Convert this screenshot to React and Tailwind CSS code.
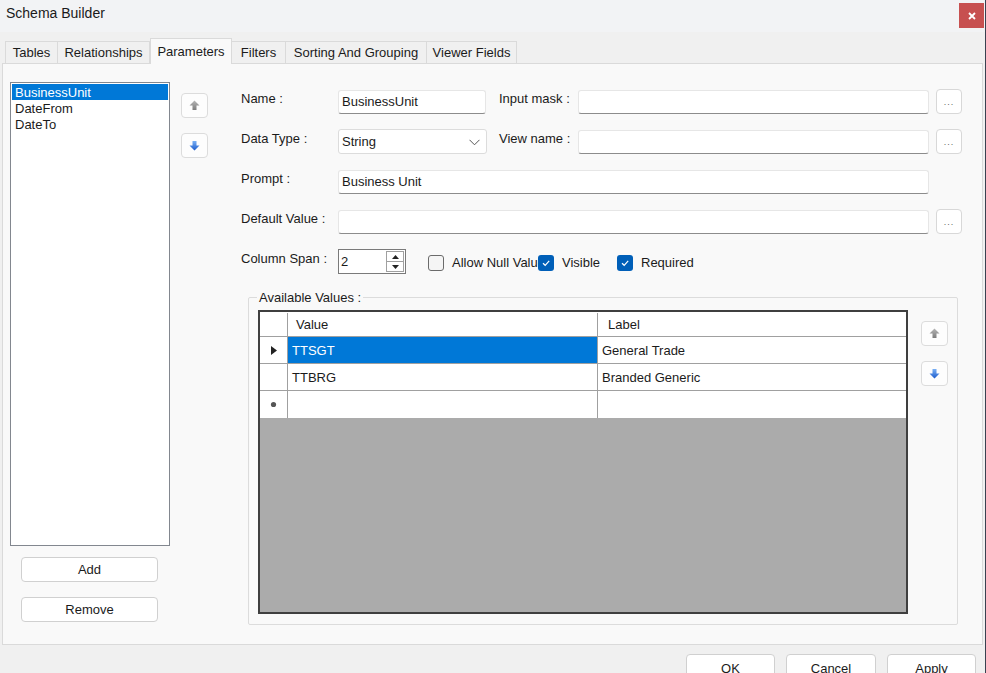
import React from "react";

const F = { fontFamily: '"Liberation Sans", Arial, sans-serif' };

function UpArrow({ active }) {
  return (
    <svg width="11" height="11" viewBox="0 0 11 11">
      <defs>
        <linearGradient id={active ? "ga" : "gb"} x1="0" y1="0" x2="0" y2="1">
          <stop offset="0" stopColor={active ? "#6aa3f0" : "#b5b5b5"} />
          <stop offset="1" stopColor={active ? "#1f5fd0" : "#7d7d7d"} />
        </linearGradient>
      </defs>
      <polygon points="5.5,0.5 10.5,5.5 7.5,5.5 7.5,10 3.5,10 3.5,5.5 0.5,5.5" fill={`url(#${active ? "ga" : "gb"})`} />
    </svg>
  );
}

function DownArrow() {
  return (
    <svg width="11" height="11" viewBox="0 0 11 11">
      <defs>
        <linearGradient id="gd" x1="0" y1="0" x2="0" y2="1">
          <stop offset="0" stopColor="#79b0f5" />
          <stop offset="1" stopColor="#1d5ccc" />
        </linearGradient>
      </defs>
      <polygon points="3.5,1 7.5,1 7.5,5.5 10.5,5.5 5.5,10.5 0.5,5.5 3.5,5.5" fill="url(#gd)" />
    </svg>
  );
}

function ArrowBtn({ down, disabled }) {
  return (
    <div className="flex h-[25px] w-[27px] items-center justify-center rounded-[4px] border border-[#dcdcdc] bg-[#fdfdfd]">
      {down ? <DownArrow /> : <UpArrow active={!disabled} />}
    </div>
  );
}

function Input({ w, value }) {
  return (
    <div
      className={`flex h-[24px] items-center rounded-[3px] border border-[#e6e6e6] border-b-[#8c8c8c] bg-white pl-[3px] pt-[1px] text-[13px] text-[#1b1b1b] ${w}`}
    >
      {value}
    </div>
  );
}

function Dots() {
  return (
    <div className="ml-[7px] flex h-[25px] w-[26px] items-end justify-center rounded-[4px] border border-[#d8d8d8] bg-white pb-[6px] text-[9px] leading-none tracking-[1px] text-[#666]">
      ...
    </div>
  );
}

function Label({ children, w }) {
  return <div className={`self-start pt-[2px] text-[13px] leading-[15px] text-[#1b1b1b] ${w}`}>{children}</div>;
}

function CheckBox({ checked }) {
  if (checked) {
    return (
      <div className="flex h-[16px] w-[16px] shrink-0 items-center justify-center rounded-[3px] bg-[#005fb8]">
        <svg width="10" height="10" viewBox="0 0 10 10">
          <path d="M2 5.2 L4.2 7.3 L8.2 2.8" fill="none" stroke="white" strokeWidth="1.2" />
        </svg>
      </div>
    );
  }
  return <div className="h-[16px] w-[16px] shrink-0 rounded-[3px] border border-[#6b6b6b] bg-[#f5f5f5]" />;
}

export default function App() {
  return (
    <div className="flex h-[673px] w-[986px] overflow-hidden bg-[#3a4150]" style={F}>
      <div className="flex h-[673px] w-[985px] flex-col bg-[#f0f0f0] text-[#1b1b1b]">
        {/* Title bar */}
        <div className="flex h-[32px] shrink-0 items-start justify-between bg-[#f2f3f5]">
          <div className="pl-[6px] pt-[4px] text-[14px] leading-[18px] text-[#1a1a1a]">Schema Builder</div>
          <div className="mt-[3px] mr-[1px] flex h-[25px] w-[25px] items-center justify-center bg-[#c75050]">
            <svg width="8" height="8" viewBox="0 0 8 8">
              <path d="M1 1 L7 7 M7 1 L1 7" stroke="white" strokeWidth="1.8" />
            </svg>
          </div>
        </div>

        {/* Tabs */}
        <div className="flex h-[31px] shrink-0 items-end pl-[5px] text-[13px]">
          <div className="flex h-[22px] w-[53px] items-center justify-center border border-b-0 border-[#dadada] bg-[#f0f0f0] pt-[1px]">Tables</div>
          <div className="flex h-[22px] w-[92px] items-center justify-center border border-b-0 border-l-0 border-[#dadada] bg-[#f0f0f0] pt-[1px]">Relationships</div>
          <div className="relative -mb-[1px] flex h-[26px] w-[82px] items-start justify-center border border-b-0 border-[#dadada] bg-[#f9f9f9] pt-[3px]">Parameters</div>
          <div className="flex h-[22px] w-[54px] items-center justify-center border border-b-0 border-l-0 border-[#dadada] bg-[#f0f0f0] pt-[1px]">Filters</div>
          <div className="flex h-[22px] w-[141px] items-center justify-center border border-b-0 border-l-0 border-[#dadada] bg-[#f0f0f0] pt-[1px]">Sorting And Grouping</div>
          <div className="flex h-[22px] w-[90px] items-center justify-center border border-b-0 border-l-0 border-[#dadada] bg-[#f0f0f0] pt-[1px]">Viewer Fields</div>
        </div>

        {/* Tab page */}
        <div className="mx-[2px] flex h-[582px] w-[981px] shrink-0 border border-[#dadada] bg-[#f9f9f9]">
          {/* left column */}
          <div className="ml-[7px] mt-[18px] flex w-[160px] flex-col">
            <div className="h-[464px] w-[160px] border border-[#82878f] bg-white p-[1px] text-[13px] leading-[16px]">
              <div className="h-[16px] bg-[#0078d7] pl-[3px] pt-[1px] text-white">BusinessUnit</div>
              <div className="h-[16px] pl-[3px] pt-[1px]">DateFrom</div>
              <div className="h-[16px] pl-[3px] pt-[1px]">DateTo</div>
            </div>
            <div className="ml-[11px] mt-[11px] flex h-[25px] w-[137px] items-center justify-center rounded-[4px] border border-[#d0d0d0] bg-white pt-[1px] text-[13px]">Add</div>
            <div className="ml-[11px] mt-[15px] flex h-[25px] w-[137px] items-center justify-center rounded-[4px] border border-[#d0d0d0] bg-white pt-[1px] text-[13px]">Remove</div>
          </div>

          {/* arrows */}
          <div className="ml-[11px] mt-[29px] flex flex-col gap-[15px]">
            <ArrowBtn disabled />
            <ArrowBtn down />
          </div>

          {/* form */}
          <div className="ml-[33px] mt-[25px] flex w-[721px] flex-col">
            <div className="flex h-[25px] items-center">
              <Label w="w-[97px]">Name :</Label>
              <Input w="w-[148px]" value="BusinessUnit" />
              <Label w="ml-[13px] w-[79px]">Input mask :</Label>
              <Input w="w-[351px]" />
              <Dots />
            </div>
            <div className="mt-[15px] flex h-[25px] items-center">
              <Label w="w-[97px]">Data Type :</Label>
              <div className="flex h-[25px] w-[149px] items-center justify-between rounded-[3px] border border-[#dcdcdc] bg-white pl-[3px] pr-[6px] pt-[1px] text-[13px]">
                <span>String</span>
                <svg width="11" height="7" viewBox="0 0 11 7">
                  <path d="M0.5 0.8 L5.5 5.8 L10.5 0.8" fill="none" stroke="#555" strokeWidth="1" />
                </svg>
              </div>
              <Label w="ml-[12px] w-[79px]">View name :</Label>
              <Input w="w-[351px]" />
              <Dots />
            </div>
            <div className="mt-[15px] flex h-[25px] items-center">
              <Label w="w-[97px]">Prompt :</Label>
              <Input w="w-[591px]" value="Business Unit" />
            </div>
            <div className="mt-[15px] flex h-[25px] items-center">
              <Label w="w-[97px]">Default Value :</Label>
              <Input w="w-[591px]" />
              <Dots />
            </div>
            <div className="mt-[15px] flex h-[25px] items-center">
              <Label w="w-[97px]">Column Span :</Label>
              <div className="flex h-[25px] w-[68px] items-center justify-between border border-[#7a7a7a] bg-white pl-[2px] pr-[1px] text-[13px]">
                <span className="pt-[1px]">2</span>
                <div className="flex h-[21px] w-[18px] flex-col border border-[#a0a0a0]">
                  <div className="flex flex-1 items-center justify-center border-b border-[#a0a0a0]">
                    <svg width="7" height="4" viewBox="0 0 7 4"><polygon points="3.5,0 7,4 0,4" fill="#222" /></svg>
                  </div>
                  <div className="flex flex-1 items-center justify-center">
                    <svg width="7" height="4" viewBox="0 0 7 4"><polygon points="0,0 7,0 3.5,4" fill="#222" /></svg>
                  </div>
                </div>
              </div>
              <div className="ml-[22px] flex w-[110px] items-center gap-[8px] overflow-hidden whitespace-nowrap pt-[2px] text-[13px]">
                <CheckBox />
                <span>Allow Null Value</span>
              </div>
              <div className="flex w-[79px] items-center gap-[8px] whitespace-nowrap pt-[2px] text-[13px]">
                <CheckBox checked />
                <span>Visible</span>
              </div>
              <div className="flex items-center gap-[8px] whitespace-nowrap pt-[2px] text-[13px]">
                <CheckBox checked />
                <span>Required</span>
              </div>
            </div>

            {/* Available values group */}
            <div className="relative ml-[7px] mt-[23px] flex h-[328px] w-[710px] items-start rounded-[2px] border border-[#dcdcdc]">
              <div className="absolute -top-[8px] left-[8px] bg-[#f9f9f9] px-[2px] text-[13px] leading-[15px]">Available Values :</div>
              <div className="ml-[9px] mt-[12px] flex h-[304px] w-[650px] flex-col border-2 border-[#3f3f3f] bg-[#ababab] text-[13px]">
                {/* header */}
                <div className="flex h-[25px] shrink-0 border-b border-[#a0a0a0] bg-white pt-[1px]">
                  <div className="w-[28px] border-r border-[#a0a0a0]" />
                  <div className="flex w-[310px] items-center border-r border-[#a0a0a0] pl-[8px]">Value</div>
                  <div className="flex flex-1 items-center pl-[10px]">Label</div>
                </div>
                <div className="flex h-[27px] shrink-0 border-b border-[#a0a0a0] bg-white">
                  <div className="flex w-[28px] items-center justify-center border-r border-[#a0a0a0]">
                    <svg width="6" height="9" viewBox="0 0 6 9"><polygon points="0,0 6,4.5 0,9" fill="#222" /></svg>
                  </div>
                  <div className="flex w-[310px] items-center border-r border-[#a0a0a0] bg-[#0078d7] pl-[4px] pt-[1px] text-white">TTSGT</div>
                  <div className="flex flex-1 items-center pl-[4px] pt-[1px]">General Trade</div>
                </div>
                <div className="flex h-[27px] shrink-0 border-b border-[#a0a0a0] bg-white">
                  <div className="w-[28px] border-r border-[#a0a0a0]" />
                  <div className="flex w-[310px] items-center border-r border-[#a0a0a0] pl-[4px] pt-[1px]">TTBRG</div>
                  <div className="flex flex-1 items-center pl-[4px] pt-[1px]">Branded Generic</div>
                </div>
                <div className="flex h-[27px] shrink-0 bg-white">
                  <div className="flex w-[28px] items-center justify-center border-r border-[#a0a0a0]">
                    <svg width="7" height="7" viewBox="0 0 7 7"><circle cx="3.5" cy="3.5" r="2.6" fill="#555" /></svg>
                  </div>
                  <div className="w-[310px] border-r border-[#a0a0a0]" />
                  <div className="flex-1" />
                </div>
              </div>
              <div className="ml-[13px] mt-[23px] flex flex-col gap-[15px]">
                <ArrowBtn disabled />
                <ArrowBtn down />
              </div>
            </div>
          </div>
        </div>

        {/* bottom buttons */}
        <div className="mt-[9px] flex justify-end gap-[11px] pr-[9px]">
          <div className="flex h-[28px] w-[89px] items-start justify-center rounded-[4px] border border-[#d0d0d0] bg-white pt-[4px] text-[13px]">OK</div>
          <div className="flex h-[28px] w-[90px] items-start justify-center rounded-[4px] border border-[#d0d0d0] bg-white pt-[4px] text-[13px]">Cancel</div>
          <div className="flex h-[28px] w-[89px] items-start justify-center rounded-[4px] border border-[#d0d0d0] bg-white pt-[4px] text-[13px]">Apply</div>
        </div>
      </div>
    </div>
  );
}
